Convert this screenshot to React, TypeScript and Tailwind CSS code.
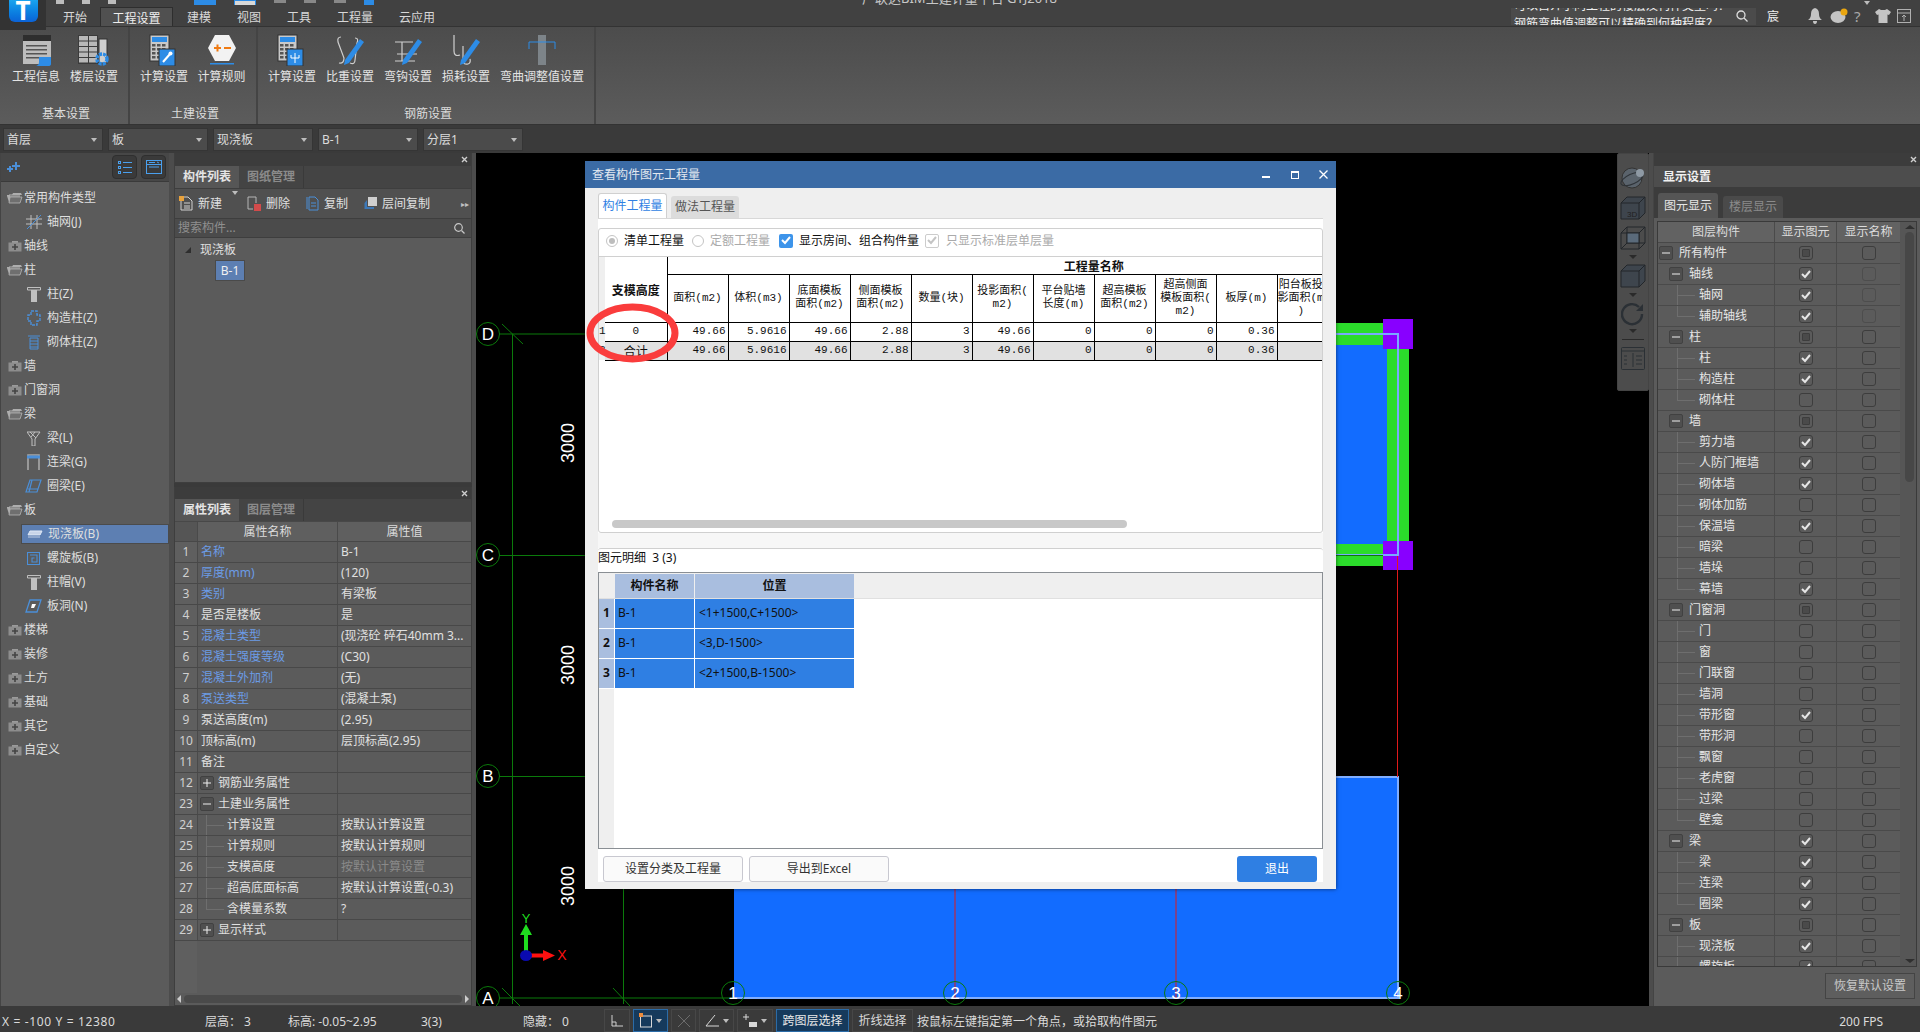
import React from 'react';

const Caret = () => <span className="w-0 h-0 border-x-[3px] border-x-transparent border-t-[4px] border-t-[#bdbdbd]" />;

// ----- ribbon icons -----
const CalcBase = ({ children }: { children?: React.ReactNode }) => (
  <svg width="30" height="32" viewBox="0 0 30 32">
    <rect x="1" y="1" width="19" height="26" fill="#c9c9c9" stroke="#333" />
    <rect x="3" y="3" width="15" height="5" fill="#2d8ce6" />
    {[10, 14, 18, 22].map((y) => [3, 8, 13].map((x) => <rect key={`${x}${y}`} x={x} y={y} width="3.5" height="2.5" fill="#555" />))}
    <rect x="10" y="15" width="16" height="17" fill="#2d8ce6" stroke="#333" />
    {children}
  </svg>
);

const PencilHook = ({ hook }: { hook: string }) => (
  <svg width="30" height="32" viewBox="0 0 30 32" fill="none">
    <path d={hook} stroke="#cfcfcf" strokeWidth="1.2" />
    <path d="M10 26 L25 5 L29 8 L14 29 L9 31 Z" fill="#2d8ce6" />
  </svg>
);

const infoIcon = (
  <svg width="32" height="32" viewBox="0 0 32 32">
    <rect x="3" y="1" width="28" height="7" fill="#2e2e2e" />
    <rect x="3" y="7" width="28" height="23" fill="#bdbdbd" />
    {[11, 15, 19, 23].map((y) => <rect key={y} x="6" y={y} width="21" height="1.5" fill="#555" />)}
    <path d="M19 23 H31 V30 Q31 32 28 32 H16 Q19 31 19 28 Z" fill="#2d8ce6" />
  </svg>
);

const floorIcon = (
  <svg width="34" height="32" viewBox="0 0 34 32">
    <rect x="22" y="5" width="8" height="24" fill="#cfcfcf" stroke="#333" />
    <rect x="1" y="1" width="20" height="29" fill="#3b3b3b" />
    {[2, 7.5, 13, 18.5, 24].map((y) => (
      <g key={y}>
        <rect x="2" y={y} width="9" height="4.5" fill="#b8b8b8" />
        <rect x="12" y={y} width="8" height="4.5" fill="#b8b8b8" />
      </g>
    ))}
    <circle cx="25" cy="25" r="5" fill="none" stroke="#2d8ce6" strokeWidth="3.5" strokeDasharray="3 1" />
  </svg>
);

const ruleIcon = (
  <svg width="30" height="32" viewBox="0 0 30 32">
    <path d="M8 1 H22 L29 14 L22 27 H8 L1 14 Z" fill="#f2f2f2" />
    <rect x="7" y="13" width="7" height="2" fill="#ef7a12" />
    <rect x="9.5" y="10.5" width="2" height="7" fill="#ef7a12" />
    <rect x="17" y="13" width="7" height="2" fill="#ef7a12" />
    <rect x="3" y="29" width="24" height="1.5" fill="#2d8ce6" />
  </svg>
);

const adjustIcon = (
  <svg width="30" height="32" viewBox="0 0 30 32" fill="none">
    <rect x="11" y="1" width="8" height="30" fill="#7d8489" />
    <path d="M2 15 V8 H28 V15" stroke="#2d8ce6" />
  </svg>
);

const ribbonIcons: Record<string, React.ReactNode> = {
  info: infoIcon,
  floor: floorIcon,
  calc: (
    <CalcBase>
      <path d="M14 28 L21 20" stroke="#fff" strokeWidth="2" />
      <circle cx="21.5" cy="19.5" r="2" fill="#fff" />
    </CalcBase>
  ),
  rule: ruleIcon,
  calc2: (
    <CalcBase>
      <path d="M18 19 V29 M14 21 V24 H22 V21" stroke="#fff" fill="none" />
    </CalcBase>
  ),
  weight: <PencilHook hook="M6 3 Q2 3 3 8 L9 24 Q9 30 4 29 M20 4 Q24 4 22 9 L20 26 Q20 31 15 29" />,
  hook: <PencilHook hook="M2 8 H20 M9 8 V27 M4 20 H24 M2 27 H22" />,
  loss: <PencilHook hook="M3 1 V17 Q3 23 9 21 M12 12 V26 Q12 31 17 30 Q20 29 19 25" />,
  adjust: adjustIcon,
};

const ribbonGroups = [
  { title: '基本设置', w: 130, pl: 7, items: [['info', '工程信息', 58], ['floor', '楼层设置', 58]] },
  { title: '土建设置', w: 128, pl: 5, items: [['calc', '计算设置', 58], ['rule', '计算规则', 57]] },
  { title: '钢筋设置', w: 338, pl: 5, items: [['calc2', '计算设置', 58], ['weight', '比重设置', 58], ['hook', '弯钩设置', 58], ['loss', '损耗设置', 58], ['adjust', '弯曲调整值设置', 94]] },
] as const;

const Ribbon = () => (
  <div className="h-[98px] flex bg-gradient-to-b from-[#4c4c4c] to-[#5c5c5c] border-b border-[#333]">
    {ribbonGroups.map((g) => (
      <div key={g.title} className="flex flex-col border-r-2 border-[#444]" style={{ width: g.w, paddingLeft: g.pl }}>
        <div className="flex pt-[6px]">
          {g.items.map(([icon, label, w]) => (
            <div key={label + icon} className="flex flex-col items-center" style={{ width: w }}>
              <div className="h-[33px] flex items-center justify-center">{ribbonIcons[icon]}</div>
              <span className="text-[12px] leading-[18px] mt-[2px] text-[#e4e4e4] whitespace-nowrap">{label}</span>
            </div>
          ))}
        </div>
        <div className="mt-auto mb-[1px] text-center text-[12px] leading-[18px] text-[#dcdcdc]" style={{ marginLeft: 4 - g.pl }}>{g.title}</div>
      </div>
    ))}
  </div>
);

const TopBar = () => (
  <div className="h-[27px] relative flex bg-[#414141] border-b border-[#333]">
    <div className="absolute left-0 top-0 w-[46px] h-[30px] bg-[#333] z-10 flex justify-center">
      <div className="w-[29px] h-[22px] rounded-b-[6px] bg-gradient-to-b from-[#1aa4ee] to-[#0c62d6] text-white font-bold text-[26px] leading-[20px] text-center">T</div>
    </div>
    <div className="absolute left-[56px] top-0 h-[5px] flex gap-[18px] overflow-hidden">
      {[8, 8, 8].map((w, i) => <div key={i} className="h-[4px] bg-[#bdbdbd]" style={{ width: w }} />)}
      <div className="ml-[60px] w-[22px] h-[5px] bg-[#2d8ce6]" />
      <div className="w-[22px] h-[6px] bg-[#d8d8d8] border border-[#2d8ce6]" />
      <div className="w-[12px] h-[3px] bg-[#888]" />
      <div className="w-[12px] h-[3px] bg-[#888]" />
      <div className="w-[12px] h-[3px] bg-[#888]" />
      <div className="w-[10px] h-[5px] bg-[#2d8ce6]" />
    </div>
    <div className="absolute left-[862px] -top-[9px] text-[13px] leading-[14px] text-[#c8c8c8] whitespace-nowrap">广联达BIM土建计量平台 GTJ2018</div>
    <div className="pl-[50px] flex items-end h-[26px] text-[12px] text-[#d8d8d8]">
      <span className="w-[50px] h-[19px] leading-[21px] text-center">开始</span>
      <span className="w-[73px] h-[19px] leading-[21px] text-center bg-[#505050] border-x border-t border-[#2e2e2e] text-[#eee]">工程设置</span>
      <span className="w-[14px]" />
      <span className="w-[24px] h-[19px] leading-[21px]">建模</span>
      <span className="w-[26px]" />
      <span className="w-[24px] h-[19px] leading-[21px]">视图</span>
      <span className="w-[26px]" />
      <span className="w-[24px] h-[19px] leading-[21px]">工具</span>
      <span className="w-[26px]" />
      <span className="w-[36px] h-[19px] leading-[21px]">工程量</span>
      <span className="w-[26px]" />
      <span className="w-[36px] h-[19px] leading-[21px]">云应用</span>
    </div>
    <div className="absolute left-[1511px] top-[8px] w-[245px] h-[17px] bg-[#4b4b4b] overflow-hidden text-[12px] leading-[19px] text-[#eee] pl-[3px]">
      <div className="-mt-[12px] whitespace-nowrap">可以自介小问工程的楼层及构件类型吗？</div>
      <div className="-mt-[1px] whitespace-nowrap">钢筋弯曲值调整可以精确到何种程度？</div>
      <svg className="absolute right-[8px] top-[2px]" width="12" height="12" viewBox="0 0 12 12" fill="none" stroke="#ddd" strokeWidth="1.3"><circle cx="5" cy="5" r="4" /><path d="M8 8 L11.5 11.5" /></svg>
    </div>
    <span className="absolute left-[1767px] top-[8px] text-[12px] leading-[18px] text-[#eee]">宸</span>
    <div className="absolute left-[1808px] top-[8px] flex items-center h-[16px]">
      <svg width="14" height="16" viewBox="0 0 14 16" fill="#c4c4c4"><path d="M7 0 Q11 1 11 6 Q11 10 14 12 H0 Q3 10 3 6 Q3 1 7 0 Z M5 13 H9 Q9 16 7 16 Q5 16 5 13 Z" /></svg>
      <svg className="ml-[8px]" width="18" height="17" viewBox="0 0 18 17"><ellipse cx="8" cy="9" rx="7.5" ry="6" fill="#c4c4c4" /><circle cx="14" cy="4" r="3.5" fill="#eaa610" /></svg>
      <span className="ml-[6px] text-[15px] leading-[16px] text-[#a8a8a8]">?</span>
      <span className="ml-[3px]"><Caret /></span>
      <svg className="ml-[5px]" width="16" height="14" viewBox="0 0 16 14" fill="#c4c4c4"><path d="M4 0 L6 1 H10 L12 0 L16 3 L14 6 L12.5 5.5 V14 H3.5 V5.5 L2 6 L0 3 Z" /></svg>
      <svg className="ml-[6px]" width="14" height="14" viewBox="0 0 14 14" fill="none" stroke="#b0b0b0"><rect x="0.5" y="0.5" width="13" height="13" /><path d="M1 4 H13 M7 12 V6 M5 8 L7 6 L9 8" /></svg>
    </div>
  </div>
);

const Dropdowns = () => (
  <div className="h-[28px] bg-[#3a3a3a] flex items-center gap-[5px] pl-[3px] pt-[1px]">
    {['首层', '板', '现浇板', 'B-1', '分层1'].map((t) => (
      <div key={t} className="w-[100px] h-[23px] bg-[#4b4b4b] border border-[#353535] flex items-center justify-between pl-[3px] pr-[5px] pt-[1px] text-[12px] text-[#dcdcdc]">
        {t}
        <Caret />
      </div>
    ))}
  </div>
);

// ----- nav tree -----
const FolderOpen = () => (
  <svg width="16" height="12" viewBox="0 0 16 12"><path d="M2 2 H13 V10 H2 Z" fill="#8a8a8a" /><path d="M0 3 H5 L6 1 H14 L15 3 V3 H3 L3 10 H2 L0 4 Z" fill="#adadad" /><path d="M3 5 H15 L13 11 H2 Z" fill="#6f6f6f" stroke="#b5b5b5" strokeWidth="0.8" /></svg>
);
const FolderPlus = () => (
  <svg width="14" height="12" viewBox="0 0 14 12"><path d="M4 1 H10 V3 H4 Z" fill="#9b9b9b" /><rect x="0.5" y="2.5" width="13" height="9" fill="#8d8d8d" /><path d="M7 4 V10 M4 7 H10" stroke="#444" strokeWidth="1.6" /></svg>
);
const navIcon = (k: string) => {
  const blue = '#4b8fd8';
  const gray = '#c0c0c0';
  switch (k) {
    case 'grid': return <svg width="16" height="16" viewBox="0 0 16 16" fill="none" stroke={gray}><path d="M5 1 V15 M11 1 V15 M0 5 H16 M0 10 H16" /><path d="M1 15 L15 1" stroke={blue} /></svg>;
    case 'col': return <svg width="14" height="15" viewBox="0 0 14 15"><path d="M0.5 0.5 H13.5 V3 H0.5 Z" fill="none" stroke={gray} /><rect x="4" y="3" width="6" height="12" fill={gray} /></svg>;
    case 'gz': return <svg width="14" height="16" viewBox="0 0 14 16" fill="none" stroke={blue} strokeWidth="1.4" strokeDasharray="3 1"><path d="M4 1 H10 V5 H13 V11 H10 V15 H4 V11 H1 V5 H4 Z" /></svg>;
    case 'qt': return <svg width="12" height="15" viewBox="0 0 12 15" fill="none" stroke={blue}><path d="M0 1 H12 M2 3 H10 V14 H2 Z M2 6 H10 M2 9 H10 M2 12 H10" /></svg>;
    case 'beam': return <svg width="14" height="15" viewBox="0 0 14 15" fill="none" stroke={gray}><path d="M0 1 H13 L8 8 V15 H5 V8 Z M3 1 L9 7 M8 1 L4 6" /></svg>;
    case 'lian': return <svg width="13" height="16" viewBox="0 0 13 16" fill="none" stroke="#a8a8a8" strokeWidth="1.6"><path d="M1 16 V1 H12 V16" /><path d="M0 3 H13" stroke={blue} strokeWidth="3" /></svg>;
    case 'ring': return <svg width="17" height="14" viewBox="0 0 17 14" fill="none" stroke={blue} strokeWidth="1.2"><path d="M5 1 H16 L12 13 H1 Z M3 10 H13 M7 1 L4 13" /></svg>;
    case 'slab': return <svg width="16" height="9" viewBox="0 0 16 9"><path d="M3 1 H15 L13 5 H1 Z" fill="#c8d4e8" stroke="#dfe8f5" /><path d="M1 5 H13 V8 H1 Z" fill="#8fa7cc" /></svg>;
    case 'spiral': return <svg width="13" height="13" viewBox="0 0 13 13" fill="none" stroke={blue} strokeWidth="1.1"><path d="M0.5 0.5 H12.5 V12.5 H0.5 Z M3 3 H10 V10 H5 V6 H7.5" /></svg>;
    case 'hole': return <svg width="17" height="14" viewBox="0 0 17 14"><path d="M5 1 H16 L12 13 H1 Z" fill="none" stroke={blue} strokeWidth="1.3" /><path d="M7 5 H11 L9 9 H6 Z" fill="#fff" /></svg>;
    default: return null;
  }
};

const navRows: { t: string; k?: string; open?: boolean; sel?: boolean }[] = [
  { t: '常用构件类型', open: true }, { t: '轴网(J)', k: 'grid' }, { t: '轴线' }, { t: '柱', open: true },
  { t: '柱(Z)', k: 'col' }, { t: '构造柱(Z)', k: 'gz' }, { t: '砌体柱(Z)', k: 'qt' }, { t: '墙' }, { t: '门窗洞' },
  { t: '梁', open: true }, { t: '梁(L)', k: 'beam' }, { t: '连梁(G)', k: 'lian' }, { t: '圈梁(E)', k: 'ring' },
  { t: '板', open: true }, { t: '现浇板(B)', k: 'slab', sel: true }, { t: '螺旋板(B)', k: 'spiral' }, { t: '柱帽(V)', k: 'col' }, { t: '板洞(N)', k: 'hole' },
  { t: '楼梯' }, { t: '装修' }, { t: '土方' }, { t: '基础' }, { t: '其它' }, { t: '自定义' },
];

const NavPanel = () => (
  <div className="w-[169px] bg-[#5b5b5b] border-l border-[#444] flex flex-col">
    <div className="h-[29px] bg-[#474747] border-b border-[#3a3a3a] flex items-center pl-[6px] pr-[3px]">
      <svg width="13" height="10" viewBox="0 0 13 10" fill="#4b8fd8"><path d="M8 0 H10 V3 H13 V5 H10 V8 H8 V5 H5 V3 H8 Z M2 4 H4 V6 H6 V8 H4 V10 H2 V8 H0 V6 H2 Z" /></svg>
      <div className="ml-auto w-[25px] h-[24px] rounded-[4px] bg-[#3a3a3a] border border-[#2f2f2f] flex items-center justify-center">
        <svg width="14" height="13" viewBox="0 0 14 13" fill="none" stroke="#4aa0ee"><path d="M5 1.5 H14 M5 6.5 H14 M5 11.5 H14" /><rect x="0.5" y="0.5" width="2" height="2" /><rect x="0.5" y="5.5" width="2" height="2" /><rect x="0.5" y="10.5" width="2" height="2" /></svg>
      </div>
      <div className="ml-[4px] w-[25px] h-[24px] rounded-[4px] bg-[#3a3a3a] border border-[#2f2f2f] flex items-center justify-center">
        <svg width="16" height="14" viewBox="0 0 16 14" fill="none" stroke="#4aa0ee"><rect x="0.5" y="0.5" width="15" height="13" /><path d="M0.5 4.5 H15.5 M3 2.5 H9 M11 2 L13 3 M3 7 H13" /></svg>
      </div>
    </div>
    <div className="pt-[4px]">
      {navRows.map((r) => (
        <div key={r.t} className="h-[24px] flex items-center text-[12px] text-[#dfdfdf]">
          {r.k ? (
            <div className={`ml-[20px] h-[20px] flex-1 flex items-center pl-[4px] ${r.sel ? 'bg-[#5d7fb2] border border-[#4b4b4b]' : ''}`}>
              <span className="w-[17px] flex justify-center">{navIcon(r.k)}</span>
              <span className="ml-[5px]">{r.t}</span>
            </div>
          ) : (
            <>
              <span className="ml-[5px] w-[17px] flex justify-center">{r.open ? <FolderOpen /> : <FolderPlus />}</span>
              <span className="ml-[1px]">{r.t}</span>
            </>
          )}
        </div>
      ))}
    </div>
  </div>
);

// ----- middle panels -----
const PanelClose = ({ tall }: { tall?: boolean }) => (
  <div className={`${tall ? 'h-[13px]' : 'h-[12px]'} bg-[#3c3c3c] flex items-center justify-end pr-[3px] text-[#cfcfcf]`}>
    <svg width="7" height="7" viewBox="0 0 7 7" stroke="currentColor" strokeWidth="1.4"><path d="M1 1 L6 6 M6 1 L1 6" /></svg>
  </div>
);

const PanelTabs = ({ a, b }: { a: string; b: string }) => (
  <div className="h-[22px] bg-[#444] flex text-[12px] leading-[22px]">
    <span className="w-[64px] text-center bg-[#565656] text-[#e4e4e4] font-bold">{a}</span>
    <span className="w-[65px] text-center text-[#8b8b8b] border-r border-[#3a3a3a] font-bold">{b}</span>
  </div>
);

const ComponentPanel = () => (
  <div className="h-[330px] flex flex-col border border-[#3e3e3e] border-t-0 bg-[#5b5b5b]">
    <PanelClose tall />
    <PanelTabs a="构件列表" b="图纸管理" />
    <div className="h-[31px] bg-[#505050] border-y border-[#3e3e3e] flex items-center text-[12px] text-[#e0e0e0] pl-[4px]">
      <svg width="14" height="15" viewBox="0 0 14 15" fill="none" stroke="#d0d0d0"><path d="M2 1 H9 L13 5 V14 H2 Z M5 7 H11 M5 10 H11 M5 12 H11" /><rect x="0" y="0" width="5" height="5" fill="#e8a23c" stroke="none" /></svg>
      <span className="ml-[5px]">新建</span>
      <span className="ml-[10px]"><Caret /></span>
      <svg className="ml-[9px]" width="14" height="15" viewBox="0 0 14 15" fill="none" stroke="#b5b5b5"><path d="M1 1 H9 V7 M1 1 V13 H6" /><rect x="7" y="8" width="7" height="7" fill="#d24b4b" stroke="none" /></svg>
      <span className="ml-[5px]">删除</span>
      <svg className="ml-[16px]" width="13" height="15" viewBox="0 0 13 15" fill="none" stroke="#4b8fd8"><path d="M1 1 V13 M3 1 H9 L12 4 V14 H3 Z M5 7 H10 M5 10 H10" /></svg>
      <span className="ml-[5px]">复制</span>
      <svg className="ml-[16px]" width="13" height="13" viewBox="0 0 13 13"><rect x="4" y="0" width="9" height="9" fill="#cfcfcf" /><path d="M3 3 V10 H10 V12 H0.5 V6 Z" fill="#3c78b8" /></svg>
      <span className="ml-[5px]">层间复制</span>
      <span className="ml-auto mr-[2px] text-[#c0c0c0] text-[8px]">▸▸</span>
    </div>
    <div className="h-[19px] bg-[#4b4b4b] border-b border-[#3e3e3e] flex items-center justify-between pl-[3px] pr-[6px] text-[12px] text-[#8f8f8f]">
      搜索构件...
      <svg width="11" height="11" viewBox="0 0 11 11" fill="none" stroke="#c8c8c8" strokeWidth="1.2"><circle cx="4.5" cy="4.5" r="3.8" /><path d="M7.5 7.5 L10.5 10.5" /></svg>
    </div>
    <div className="flex-1 pl-[10px] pt-[3px] text-[12px] text-[#e0e0e0]">
      <div className="flex items-center h-[17px]">
        <span className="w-0 h-0 border-l-[6px] border-l-transparent border-b-[6px] border-b-[#2e2e2e]" />
        <span className="ml-[9px]">现浇板</span>
      </div>
      <div className="ml-[30px] mt-[2px] w-[30px] h-[21px] bg-[#5d7fb2] border border-[#4a4a4a] text-center leading-[19px] text-[#f0f0f0]">B-1</div>
    </div>
  </div>
);

type PropRow = { n: number; name: string; val?: string; link?: boolean; dim?: boolean; tog?: '+' | '-'; child?: boolean; last?: boolean };
const propRows: PropRow[] = [
  { n: 1, name: '名称', val: 'B-1', link: true },
  { n: 2, name: '厚度(mm)', val: '(120)', link: true },
  { n: 3, name: '类别', val: '有梁板', link: true },
  { n: 4, name: '是否是楼板', val: '是' },
  { n: 5, name: '混凝土类型', val: '(现浇砼 碎石40mm 3...', link: true },
  { n: 6, name: '混凝土强度等级', val: '(C30)', link: true },
  { n: 7, name: '混凝土外加剂', val: '(无)', link: true },
  { n: 8, name: '泵送类型', val: '(混凝土泵)', link: true },
  { n: 9, name: '泵送高度(m)', val: '(2.95)' },
  { n: 10, name: '顶标高(m)', val: '层顶标高(2.95)' },
  { n: 11, name: '备注' },
  { n: 12, name: '钢筋业务属性', tog: '+' },
  { n: 23, name: '土建业务属性', tog: '-' },
  { n: 24, name: '计算设置', val: '按默认计算设置', child: true },
  { n: 25, name: '计算规则', val: '按默认计算规则', child: true },
  { n: 26, name: '支模高度', val: '按默认计算设置', child: true, dim: true },
  { n: 27, name: '超高底面标高', val: '按默认计算设置(-0.3)', child: true },
  { n: 28, name: '含模量系数', val: '?', child: true, last: true },
  { n: 29, name: '显示样式', tog: '+' },
];

const Toggle = ({ s }: { s: '+' | '-' }) => (
  <span className="w-[14px] h-[14px] rounded-[2px] bg-[#4f4f4f] border border-[#414141] flex items-center justify-center shrink-0">
    <svg width="8" height="8" viewBox="0 0 8 8" stroke="#f0f0f0"><path d="M0 4 H8" />{s === '+' && <path d="M4 0 V8" />}</svg>
  </span>
);

const Connector = ({ last }: { last?: boolean }) => (
  <span className="w-[18px] h-full flex flex-col shrink-0">
    <span className="flex-1 border-l border-b border-[#6e6e6e]" />
    <span className={`flex-1 ${last ? '' : 'border-l border-[#6e6e6e]'}`} />
  </span>
);

const PropertyPanel = () => (
  <div className="flex-1 flex flex-col border-x border-b border-[#3e3e3e] bg-[#5b5b5b] text-[12px] text-[#e0e0e0]">
    <PanelClose />
    <PanelTabs a="属性列表" b="图层管理" />
    <div className="h-[21px] flex bg-[#5f5f5f] border-y border-[#484848] leading-[19px]">
      <span className="w-[22px] bg-[#555]" />
      <span className="w-[141px] text-center border-x border-[#4a4a4a] text-[#dcdcdc]">属性名称</span>
      <span className="flex-1 text-center text-[#dcdcdc]">属性值</span>
    </div>
    {propRows.map((r) => (
      <div key={r.n} className="h-[21px] flex border-b border-[#484848] leading-[20px]">
        <span className="w-[22px] bg-[#5f5f5f] text-center text-[#d0d0d0]">{r.n}</span>
        <div className="w-[141px] flex items-center border-x border-[#4a4a4a] whitespace-nowrap">
          {r.tog && <span className="ml-[2px] mr-[4px]"><Toggle s={r.tog} /></span>}
          {r.child && <span className="ml-[8px] mr-[3px] h-full flex"><Connector last={r.last} /></span>}
          <span className={`${r.tog || r.child ? '' : 'ml-[3px]'} ${r.link ? 'text-[#6b9be6]' : ''}`}>{r.name}</span>
        </div>
        <span className={`flex-1 pl-[3px] whitespace-nowrap overflow-hidden ${r.dim ? 'text-[#8a8a8a]' : ''}`}>{r.val}</span>
      </div>
    ))}
    <div className="flex-1 flex">
      <div className="w-[22px] bg-[#5f5f5f]" />
    </div>
    <div className="h-[12px] flex items-center px-[2px] gap-[3px]">
      <span className="w-0 h-0 border-y-[4px] border-y-transparent border-r-[4px] border-r-[#ccc]" />
      <span className="flex-1 h-[8px] rounded-full bg-[#4a4a4a]" />
      <span className="w-0 h-0 border-y-[4px] border-y-transparent border-l-[4px] border-l-[#ccc]" />
    </div>
  </div>
);

// ----- canvas -----
const Bubble = ({ x, y, t }: { x: number; y: number; t: string }) => (
  <g>
    <ellipse cx={x} cy={y} rx="11.5" ry="11.5" fill="none" stroke="#0b7a0b" />
    <text x={x} y={y + 6} textAnchor="middle" fill="#fff" fontSize="17" fontFamily="Liberation Sans, sans-serif">{t}</text>
  </g>
);

const Dim = ({ y }: { y: number }) => (
  <text transform={`translate(574 ${y}) rotate(-90)`} textAnchor="middle" fill="#fff" fontSize="18" fontFamily="Liberation Sans, sans-serif">3000</text>
);

const CadCanvas = () => (
  <svg className="block w-full h-full" viewBox="476 153 1173 853">
    <rect x="476" y="153" width="1173" height="853" fill="#000" />
    {/* slab pieces */}
    <rect x="734" y="345" width="653" height="199" fill="#126cff" />
    <rect x="734" y="323" width="649" height="22" fill="#2bdc2b" />
    <rect x="734" y="544" width="649" height="22" fill="#2bdc2b" />
    <rect x="1387" y="349" width="22" height="192" fill="#2bdc2b" />
    <rect x="1383" y="319" width="30" height="30" fill="#8800ff" />
    <rect x="1383" y="541" width="30" height="29" fill="#8800ff" />
    <path d="M734 334 H1398 V555 H734" fill="none" stroke="#7aa8ff" strokeWidth="2" />
    <rect x="734" y="777" width="664" height="221" fill="#126cff" />
    <path d="M734 777 H1398 V998 H734" fill="none" stroke="#80aeff" strokeWidth="2" />
    <path d="M955 777 V998 M1176 777 V998" stroke="#e01a1a" />
    <path d="M1397.5 556 V777" stroke="#e01a1a" />
    {/* axis lines */}
    <path d="M499 334 H734 M499 555.5 H1383 M499 776.5 H734 M499 998 H734 M512.5 334 V1004 M623.5 334 V1004" stroke="#0b7a0b" fill="none" />
    <path d="M502 324 L523 344 M502 988 L520 1006 M613 988 L630 1006" stroke="#0b7a0b" />
    <Bubble x={488} y={334} t="D" />
    <Bubble x={488} y={555} t="C" />
    <Bubble x={488} y={776} t="B" />
    <Bubble x={488} y={998} t="A" />
    <Bubble x={733} y={993} t="1" />
    <Bubble x={955} y={993} t="2" />
    <Bubble x={1176} y={993} t="3" />
    <Bubble x={1398} y={993} t="4" />
    <Dim y={443} />
    <Dim y={665} />
    <Dim y={886} />
    {/* coordinate arrows */}
    <path d="M526 952 V932" stroke="#1fdc1f" strokeWidth="4" />
    <path d="M526 924 L532 935 H520 Z" fill="#1fdc1f" />
    <path d="M530 955.5 H545" stroke="#ff1010" strokeWidth="4" />
    <path d="M555 955.5 L543 950 V961 Z" fill="#ff1010" />
    <ellipse cx="526" cy="955.5" rx="6" ry="5.5" fill="#0a0ab0" />
    <text x="526" y="923" textAnchor="middle" fill="#1fdc1f" fontSize="13" fontFamily="Liberation Sans, sans-serif">Y</text>
    <text x="562" y="960" textAnchor="middle" fill="#ff1010" fontSize="14" fontFamily="Liberation Sans, sans-serif">X</text>
  </svg>
);

const ViewTools = () => (
  <div className="absolute right-0 top-0 w-[32px] h-[238px] bg-[#4c4c4c] rounded-[2px] border border-[#444] flex flex-col items-center pt-[13px] text-[#2f3338]">
    <svg width="26" height="22" viewBox="0 0 26 22"><circle cx="12" cy="11" r="10" fill="#5a636c" stroke="#333" /><ellipse cx="12" cy="12" rx="12" ry="5" fill="none" stroke="#2e3338" transform="rotate(-25 12 12)" /><circle cx="20" cy="6" r="4" fill="#8e99a4" /></svg>
    <svg className="mt-[7px]" width="26" height="24" viewBox="0 0 26 24" fill="#3e454d" stroke="#22262a"><path d="M1 7 L7 1 H25 V17 L19 23 H1 Z" /><path d="M1 7 H19 V23 M19 7 L25 1" fill="none" /><text x="7" y="21" fontSize="8" fill="#1f1f1f" stroke="none" fontFamily="Liberation Sans, sans-serif">3D</text></svg>
    <svg className="mt-[6px]" width="26" height="24" viewBox="0 0 26 24" fill="none" stroke="#22262a"><path d="M1 7 L7 1 H25 V17 L19 23 H1 Z M1 7 H19 V23 M19 7 L25 1" /><path d="M7 1 V17 H25 M7 17 L1 23" /><rect x="7" y="7" width="12" height="10" fill="#5a6a7a" /></svg>
    <span className="mt-[5px] w-0 h-0 border-x-[4px] border-x-transparent border-t-[4px] border-t-[#2a2a2a]" />
    <svg className="mt-[5px]" width="26" height="24" viewBox="0 0 26 24" fill="#3e454d" stroke="#22262a"><path d="M1 7 L7 1 H25 V17 L19 23 H1 Z" /><path d="M1 7 H19 V23 M19 7 L25 1" fill="none" /></svg>
    <span className="mt-[5px] w-0 h-0 border-x-[4px] border-x-transparent border-t-[4px] border-t-[#2a2a2a]" />
    <svg className="mt-[5px]" width="24" height="24" viewBox="0 0 24 24" fill="none" stroke="#2b3035" strokeWidth="2.4"><path d="M21 12 A10 10 0 1 1 18 5" /><path d="M22 2 V9 H15 Z" fill="#2b3035" stroke="none" /></svg>
    <span className="mt-[3px] w-0 h-0 border-x-[4px] border-x-transparent border-t-[4px] border-t-[#2a2a2a]" />
    <span className="mt-[6px] w-[22px] h-[1px] bg-[#2a2a2a]" />
    <svg className="mt-[7px]" width="24" height="23" viewBox="0 0 24 23" fill="none" stroke="#2b3035"><rect x="0.5" y="0.5" width="23" height="22" rx="1" /><path d="M0.5 4 H23.5 M12 6 V20 M3 9 H6 M3 13 H6 M3 17 H6 M15 9 H21 M15 13 H21 M15 17 H21" /></svg>
  </div>
);

// ----- right panel -----
type Chk = 'y' | 'n' | 'p';
type LayerRow = { t: string; lv: 0 | 1 | 2; c: Chk; off?: boolean; last?: boolean };
const layerRows: LayerRow[] = [
  { t: '所有构件', lv: 0, c: 'p' },
  { t: '轴线', lv: 1, c: 'y', off: true },
  { t: '轴网', lv: 2, c: 'y', off: true },
  { t: '辅助轴线', lv: 2, c: 'y', off: true, last: true },
  { t: '柱', lv: 1, c: 'p' },
  { t: '柱', lv: 2, c: 'y' },
  { t: '构造柱', lv: 2, c: 'y' },
  { t: '砌体柱', lv: 2, c: 'n', last: true },
  { t: '墙', lv: 1, c: 'p' },
  { t: '剪力墙', lv: 2, c: 'y' },
  { t: '人防门框墙', lv: 2, c: 'y' },
  { t: '砌体墙', lv: 2, c: 'y' },
  { t: '砌体加筋', lv: 2, c: 'n' },
  { t: '保温墙', lv: 2, c: 'y' },
  { t: '暗梁', lv: 2, c: 'n' },
  { t: '墙垛', lv: 2, c: 'n' },
  { t: '幕墙', lv: 2, c: 'y', last: true },
  { t: '门窗洞', lv: 1, c: 'p' },
  { t: '门', lv: 2, c: 'n' },
  { t: '窗', lv: 2, c: 'n' },
  { t: '门联窗', lv: 2, c: 'n' },
  { t: '墙洞', lv: 2, c: 'n' },
  { t: '带形窗', lv: 2, c: 'y' },
  { t: '带形洞', lv: 2, c: 'n' },
  { t: '飘窗', lv: 2, c: 'n' },
  { t: '老虎窗', lv: 2, c: 'n' },
  { t: '过梁', lv: 2, c: 'n' },
  { t: '壁龛', lv: 2, c: 'n', last: true },
  { t: '梁', lv: 1, c: 'y' },
  { t: '梁', lv: 2, c: 'y' },
  { t: '连梁', lv: 2, c: 'y' },
  { t: '圈梁', lv: 2, c: 'y', last: true },
  { t: '板', lv: 1, c: 'p' },
  { t: '现浇板', lv: 2, c: 'y' },
  { t: '螺旋板', lv: 2, c: 'y' },
];

const Check = ({ c, off }: { c: Chk; off?: boolean }) => (
  <span className={`w-[14px] h-[14px] rounded-[3px] border flex items-center justify-center ${off ? 'border-[#4d4d4d]' : 'border-[#3d3d3d]'}`}>
    {c === 'y' && <svg width="10" height="9" viewBox="0 0 10 9" fill="none" stroke="#e6e6e6" strokeWidth="2"><path d="M1 4 L4 7 L9 1" /></svg>}
    {c === 'p' && <span className="w-[8px] h-[8px] rounded-[1px] bg-[#4a4a4a] border border-[#3d3d3d]" />}
  </span>
);

const RightPanel = () => (
  <div className="w-[267px] flex flex-col bg-[#5b5b5b] border-l border-[#444] text-[12px] text-[#e6e6e6]">
    <PanelClose tall />
    <div className="h-[21px] bg-[#4d4d4d] pl-[9px] font-bold leading-[21px] text-[#f0f0f0]">显示设置</div>
    <div className="h-[31px] bg-[#3c3c3c] flex items-end pl-[4px] gap-[5px]">
      <span className="w-[60px] h-[25px] rounded-t-[3px] bg-[#555] text-center leading-[25px]">图元显示</span>
      <span className="w-[60px] h-[22px] rounded-t-[3px] bg-[#4a4a4a] text-center leading-[22px] text-[#8b8b8b]">楼层显示</span>
    </div>
    <div className="mx-[3px] mt-[3px] h-[746px] border border-[#3a3a3a] flex overflow-hidden">
      <div className="w-[242px] flex flex-col">
        <div className="h-[21px] shrink-0 flex border-b border-[#484848] bg-[#626262] leading-[20px] text-[#dcdcdc]">
          <span className="w-[116px] text-center">图层构件</span>
          <span className="w-[63px] text-center border-x border-[#4a4a4a]">显示图元</span>
          <span className="flex-1 text-center">显示名称</span>
        </div>
        {layerRows.map((r, i) => (
          <div key={i} className="h-[21px] shrink-0 flex border-b border-[#4a4a4a]">
            <div className="w-[116px] flex items-center">
              {r.lv === 0 && <span className="ml-[1px] mr-[6px]"><Toggle s="-" /></span>}
              {r.lv === 1 && <span className="ml-[11px] mr-[6px]"><Toggle s="-" /></span>}
              {r.lv === 2 && <span className="ml-[19px] mr-[4px] h-full flex"><Connector last={r.last} /></span>}
              <span>{r.t}</span>
            </div>
            <div className="w-[63px] flex items-center justify-center border-x border-[#4a4a4a]"><Check c={r.c} /></div>
            <div className="flex-1 flex items-center justify-center"><Check c="n" off={r.off} /></div>
          </div>
        ))}
      </div>
      <div className="flex-1 bg-[#565656] flex flex-col items-center pt-[3px] pb-[3px] pl-[3px]">
        <span className="w-0 h-0 border-x-[5px] border-x-transparent border-b-[4px] border-b-[#2f2f2f]" />
        <span className="mt-[3px] w-[9px] h-[250px] rounded-full bg-[#474747]" />
        <span className="mt-auto w-0 h-0 border-x-[5px] border-x-transparent border-t-[4px] border-t-[#2f2f2f]" />
      </div>
    </div>
    <div className="flex justify-end pr-[5px] mt-[6px]">
      <span className="w-[90px] h-[26px] bg-[#5e5e5e] border border-[#444] text-center leading-[24px] text-[#c8c8c8]">恢复默认设置</span>
    </div>
  </div>
);

// ----- status bar -----
const StatusBar = () => (
  <div className="h-[26px] bg-[#3a3a3a] flex items-center text-[12px] text-[#dadada] whitespace-nowrap">
    <span className="w-[205px] pl-[2px] pt-[5px] tracking-[0.65px]">X = -100 Y = 12380</span>
    <span className="w-[83px] pt-[5px]">层高： 3</span>
    <span className="w-[133px] pt-[5px]">标高: -0.05~2.95</span>
    <span className="w-[102px] pt-[5px]">3(3)</span>
    <span className="w-[81px] pt-[5px]">隐藏： 0</span>
    <div className="flex h-[23px] self-end gap-[3px]">
      <span className="w-[26px] border border-[#474747] flex items-center justify-center">
        <svg width="12" height="12" viewBox="0 0 12 12" fill="none" stroke="#d0d0d0"><path d="M1 0 V11 H12 M1 7 H5 V11" /></svg>
      </span>
      <span className="w-[35px] bg-[#163a5c] border border-[#2b6ca8] flex items-center justify-center gap-[3px]">
        <svg width="14" height="15" viewBox="0 0 14 15" fill="none" stroke="#d8d8d8"><rect x="1.5" y="3" width="11" height="11" /><rect x="0" y="0" width="4" height="4" fill="#ee8b3a" stroke="none" /></svg>
        <Caret />
      </span>
      <span className="w-[25px] border border-[#474747] flex items-center justify-center">
        <svg width="14" height="14" viewBox="0 0 14 14" stroke="#6c6c6c"><path d="M1 1 L13 13 M13 1 L1 13" /></svg>
      </span>
      <span className="w-[35px] border border-[#474747] flex items-center justify-center gap-[4px]">
        <svg width="14" height="13" viewBox="0 0 14 13" fill="none" stroke="#d8d8d8"><path d="M14 12 H1 L10 1" /></svg>
        <Caret />
      </span>
      <span className="w-[36px] border border-[#474747] flex items-center justify-center gap-[3px]">
        <svg width="15" height="14" viewBox="0 0 15 14" fill="#d8d8d8"><path d="M3 0 V6 M0 3 H6" stroke="#d8d8d8" /><rect x="6" y="8" width="8" height="5" /></svg>
        <Caret />
      </span>
      <span className="w-[73px] bg-[#163a5c] border border-[#2b6ca8] text-center leading-[21px] text-[#e8e8e8]">跨图层选择</span>
      <span className="w-[61px] border border-[#474747] text-center leading-[21px]">折线选择</span>
    </div>
    <span className="ml-[4px] pt-[5px]">按鼠标左键指定第一个角点，或拾取构件图元</span>
    <span className="ml-auto mr-[37px] pt-[5px]">200 FPS</span>
  </div>
);

// ----- dialog -----
const qtyCols = [
  { h: '面积(m2)', a: '49.66' },
  { h: '体积(m3)', a: '5.9616' },
  { h: '底面模板\n面积(m2)', a: '49.66' },
  { h: '侧面模板\n面积(m2)', a: '2.88' },
  { h: '数量(块)', a: '3' },
  { h: '投影面积(\nm2)', a: '49.66' },
  { h: '平台贴墙\n长度(m)', a: '0' },
  { h: '超高模板\n面积(m2)', a: '0' },
  { h: '超高侧面\n模板面积(\nm2)', a: '0' },
  { h: '板厚(m)', a: '0.36' },
  { h: '阳台板投\n影面积(m2\n)', a: '' },
];

const QtyTable = () => (
  <table className="table-fixed border-collapse w-[725px] text-[11px] leading-[13px] text-[#111] font-['Liberation_Mono','Noto_Sans_CJK_SC',monospace]">
    <colgroup>
      <col className="w-[6px]" />
      <col className="w-[62px]" />
      {qtyCols.slice(0, 10).map((c) => <col key={c.h} className="w-[61px]" />)}
      <col className="w-[47px]" />
    </colgroup>
    <tbody>
      <tr className="h-[17px]">
        <td rowSpan={2} className="bg-[#efefef]" />
        <td rowSpan={2} className="text-center font-bold border-r border-b border-black text-[12px] font-['Noto_Sans_CJK_SC',sans-serif]">支模高度</td>
        <td colSpan={11} className="text-center font-bold border-b border-black pl-[196px] text-[12px] font-['Noto_Sans_CJK_SC',sans-serif]">工程量名称</td>
      </tr>
      <tr className="h-[48px]">
        {qtyCols.map((c, i) => (
          <td key={c.h} className={`text-center whitespace-pre overflow-hidden border-b border-black ${i < 10 ? 'border-r' : ''}`}>{c.h}</td>
        ))}
      </tr>
      <tr className="h-[19px]">
        <td className="bg-[#efefef] text-[#111]">1</td>
        <td className="text-center border-r border-b border-black">0</td>
        {qtyCols.map((c, i) => <td key={c.h} className={`text-right pr-[2px] border-b border-black ${i < 10 ? 'border-r' : ''}`}>{c.a}</td>)}
      </tr>
      <tr className="h-[19px] bg-[#e1e1e1]">
        <td className="bg-[#efefef]">2</td>
        <td className="text-center border-r border-b border-black bg-[#e1e1e1] font-['Noto_Sans_CJK_SC',sans-serif] text-[12px]">合计</td>
        {qtyCols.map((c, i) => <td key={c.h} className={`text-right pr-[2px] border-b border-black ${i < 10 ? 'border-r' : ''}`}>{c.a}</td>)}
      </tr>
    </tbody>
  </table>
);

const Radio = ({ on }: { on?: boolean }) => (
  <span className="w-[12px] h-[12px] rounded-full border border-[#c4c4c4] flex items-center justify-center shrink-0">
    {on && <span className="w-[6px] h-[6px] rounded-full bg-[#bdbdbd]" />}
  </span>
);

const detailRows = ['<1+1500,C+1500>', '<3,D-1500>', '<2+1500,B-1500>'];

const Dialog = () => (
  <div className="absolute left-[585px] top-[161px] w-[751px] h-[728px] bg-[#efefef] shadow-[0_0_4px_rgba(0,0,0,0.6)] flex flex-col font-['Noto_Sans','Noto_Sans_CJK_SC',sans-serif]">
    <div className="h-[27px] bg-[#3b6ba5] flex items-center pl-[7px] text-[12px] text-[#e2e8f0]">
      查看构件图元工程量
      <div className="ml-auto flex items-center pr-[8px]">
        <span className="w-[8px] h-[2px] mt-[5px] bg-white" />
        <span className="ml-[21px] w-[8px] h-[8px] border border-white border-t-2" />
        <svg className="ml-[20px]" width="9" height="9" viewBox="0 0 9 9" stroke="#fff" strokeWidth="1.3"><path d="M0.5 0.5 L8.5 8.5 M8.5 0.5 L0.5 8.5" /></svg>
      </div>
    </div>
    <div className="h-[30px] flex items-end pl-[13px] gap-[4px] text-[12px]">
      <span className="w-[69px] h-[25px] bg-white border border-b-0 border-[#d0d0d0] rounded-t-[3px] text-center leading-[24px] text-[#2f7fe3]">构件工程量</span>
      <span className="w-[68px] h-[22px] bg-[#dcdcdc] rounded-t-[3px] text-center leading-[22px] text-[#555]">做法工程量</span>
    </div>
    <div className="flex-1 mx-[13px] mb-[7px] bg-white border-t border-[#d8d8d8] flex flex-col">
      <div className="h-[305px] mt-[9px] border border-[#d0d0d0] rounded-[3px] flex flex-col overflow-hidden">
        <div className="h-[28px] shrink-0 flex items-center text-[12px] text-[#111] border-b border-[#d0d0d0] pl-[7px] pb-[4px] whitespace-nowrap">
          <Radio on />
          <span className="ml-[6px] w-[62px]">清单工程量</span>
          <span className="ml-[6px]"><Radio /></span>
          <span className="ml-[6px] w-[60px] text-[#aaa]">定额工程量</span>
          <span className="ml-[9px] w-[14px] h-[14px] rounded-[2px] bg-[#3d94ea] flex items-center justify-center shrink-0">
            <svg width="10" height="9" viewBox="0 0 10 9" fill="none" stroke="#fff" strokeWidth="2"><path d="M1 4 L4 7 L9 1" /></svg>
          </span>
          <span className="ml-[6px] w-[120px]">显示房间、组合构件量</span>
          <span className="ml-[6px] w-[14px] h-[14px] rounded-[2px] border border-[#ccc] flex items-center justify-center shrink-0">
            <svg width="10" height="9" viewBox="0 0 10 9" fill="none" stroke="#c4c4c4" strokeWidth="2"><path d="M1 4 L4 7 L9 1" /></svg>
          </span>
          <span className="ml-[7px] text-[#aaa]">只显示标准层单层量</span>
        </div>
        <QtyTable />
        <div className="mt-auto mb-[4px] ml-[13px] w-[515px] h-[8px] rounded-full bg-[#c8c8c8] shrink-0" />
      </div>
      <div className="h-[15px] bg-[#f7f7f7]" />
      <div className="flex-1 border-t border-[#d0d0d0] rounded-t-[3px] flex flex-col">
        <div className="h-[23px] leading-[17px] text-[12px] text-[#111] whitespace-pre">图元明细  3 (3)</div>
        <div className="h-[277px] border border-[#8a8f94] text-[12px] flex flex-col">
          <div className="h-[26px] shrink-0 bg-[#efefef] border-b border-[#e0e0e0] flex font-bold text-[#111] pl-[16px] pt-px leading-[23px]">
            <span className="w-[79px] mr-px text-center bg-[#a9bedf]">构件名称</span>
            <span className="w-[159px] text-center bg-[#a9bedf]">位置</span>
          </div>
          <div className="flex-1 flex flex-col bg-white">
            {detailRows.map((p, i) => (
              <div key={p} className="h-[30px] flex text-[#111] leading-[28px]">
                <span className="w-[15px] mr-px mb-px ml-0 bg-[#a9bedf] font-bold text-center">{i + 1}</span>
                <span className="w-[79px] mr-px mb-px pl-[3px] bg-[#2f7fe3]">B-1</span>
                <span className="w-[159px] mb-px pl-[4px] bg-[#2f7fe3]">{p}</span>
              </div>
            ))}
            <div className="flex-1 w-[15px] bg-[#efefef]" />
          </div>
        </div>
        <div className="flex-1 flex items-end pb-0 pl-[5px] pr-[6px] gap-[6px] text-[12px] text-[#333]">
          <span className="w-[140px] h-[26px] bg-[#fafafa] border border-[#c8c8d0] rounded-[3px] text-center leading-[24px]">设置分类及工程量</span>
          <span className="w-[140px] h-[26px] bg-[#fafafa] border border-[#c8c8d0] rounded-[3px] text-center leading-[24px]">导出到Excel</span>
          <span className="ml-auto w-[80px] h-[26px] bg-[#2f7fe3] rounded-[3px] text-center leading-[26px] text-white">退出</span>
        </div>
      </div>
    </div>
    <svg className="absolute left-[1px] top-[142px]" width="93" height="60" viewBox="0 0 93 60" fill="none">
      <ellipse cx="46.5" cy="30" rx="42.5" ry="26" stroke="#fa3c3c" strokeWidth="7" />
    </svg>
  </div>
);

export default function App() {
  return (
    <div className="relative w-[1920px] h-[1032px] overflow-hidden flex flex-col bg-[#3a3a3a] font-['Noto_Sans','Noto_Sans_CJK_SC',sans-serif]">
      <TopBar />
      <Ribbon />
      <Dropdowns />
      <div className="flex-1 flex min-h-0">
        <NavPanel />
        <div className="w-[5px] bg-[#4c4c4c]" />
        <div className="w-[298px] flex flex-col gap-[4px]">
          <ComponentPanel />
          <PropertyPanel />
        </div>
        <div className="w-[4px] bg-[#4c4c4c]" />
        <div className="flex-1 relative">
          <CadCanvas />
          <ViewTools />
        </div>
        <div className="w-[4px] bg-[#4c4c4c]" />
        <RightPanel />
      </div>
      <StatusBar />
      <Dialog />
    </div>
  );
}
